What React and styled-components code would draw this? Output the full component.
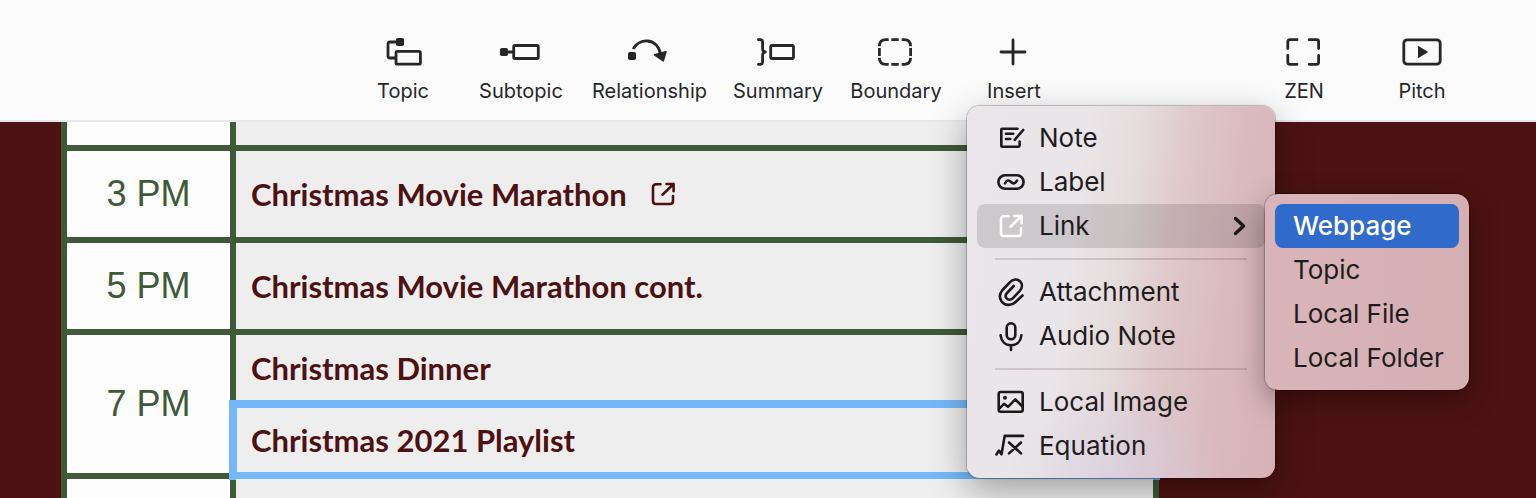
import React from "react";
import styled, { createGlobalStyle } from "styled-components";

const GlobalStyle = createGlobalStyle`
  * { box-sizing: border-box; }
  body { margin: 0; background: #4d1213; }
  button { font: inherit; color: inherit; background: none; border: 0; margin: 0; padding: 0; cursor: default; }
`;

const Page = styled.div`
  display: flex;
  flex-direction: column;
  height: 100vh;
  overflow: hidden;
  font-family: Inter, "Liberation Sans", sans-serif;
`;

const Toolbar = styled.header`
  position: relative;
  z-index: 2;
  flex: none;
  display: flex;
  justify-content: space-between;
  padding: 36px 67px 14px 356px;
  background: #fbfbfb;
  border-bottom: 2px solid #e7e7e7;
`;

const ToolGroup = styled.div`
  display: flex;
  gap: 24px;
`;

const ToolSlot = styled.div`
  position: relative;
`;

const ToolButton = styled.button`
  display: flex;
  flex-direction: column;
  align-items: center;
  gap: 8px;
  min-width: 94px;
  color: #262728;
  font-size: 20px;
  line-height: 30px;
  white-space: nowrap;
`;

const ToolIcon = styled.svg`
  display: block;
  width: 48px;
  height: 32px;
  fill: none;
  stroke: currentColor;
  stroke-width: 2.8;
  stroke-linecap: round;
  stroke-linejoin: round;
  .solid { fill: currentColor; stroke: none; }
`;

const MenuPanel = styled.ul`
  position: absolute;
  margin: 0;
  padding: 10px;
  list-style: none;
  border-radius: 13px;
  color: #1f1c1d;
  font-size: 26px;
  line-height: 44px;
`;

const InsertMenu = styled(MenuPanel)`
  left: 0;
  top: 70px;
  width: 308px;
  background:
    radial-gradient(ellipse 110px 100px at 48% 100%, rgba(214, 206, 228, 0.6), transparent),
    linear-gradient(98deg, #ebe6ea 0%, #eae5e8 34%, #e5dbdc 50%, #dfc9cb 62%, #dabbc0 78%, #d7b1b5 100%);
  box-shadow: 0 0 1px 1px rgba(0, 0, 0, 0.22), 0 12px 36px rgba(0, 0, 0, 0.34);
`;

const SubMenu = styled(MenuPanel)`
  left: 100%;
  top: -10px;
  width: 204px;
  background: linear-gradient(90deg, #d9b4b9, #d5afb2);
  box-shadow: 0 0 1px 1px rgba(0, 0, 0, 0.22), 0 10px 30px rgba(0, 0, 0, 0.34);
`;

const MenuRow = styled.li`
  position: relative;
`;

const MenuButton = styled.button`
  display: flex;
  align-items: center;
  gap: 12px;
  width: 100%;
  height: 44px;
  padding: 0 18px;
  border-radius: 8px;
  text-align: left;
  white-space: nowrap;
  background: ${(p) => (p.$state === "open" ? "rgba(0, 0, 0, 0.125)" : p.$state === "selected" ? "#306bcb" : "none")};
  color: ${(p) => (p.$state === "selected" ? "#fff" : "inherit")};
  font-weight: ${(p) => (p.$state === "selected" ? 500 : 400)};
`;

const MenuIcon = styled.svg`
  flex: none;
  display: block;
  width: 32px;
  height: 32px;
  fill: none;
  stroke: ${(p) => p.$color || "#1c191a"};
  stroke-width: 2.6;
  stroke-linecap: round;
  stroke-linejoin: round;
`;

const Chevron = styled.svg`
  width: 14px;
  height: 22px;
  margin-left: auto;
  fill: none;
  stroke: #1c191a;
  stroke-width: 3.4;
  stroke-linecap: round;
  stroke-linejoin: round;
`;

const Separator = styled.li`
  height: 2px;
  margin: 10px 18px;
  background: rgba(60, 20, 30, 0.15);
`;

const Canvas = styled.main`
  flex: 1;
  min-height: 0;
  overflow: hidden;
  padding: 0 377px 0 61px;
`;

const Schedule = styled.table`
  width: 100%;
  border-collapse: separate;
  border-spacing: 0;
  border: solid #3f5a38;
  border-width: 0 6px;
`;

const Row = styled.tr`
  height: ${(p) => p.$height}px;
`;

const TimeCell = styled.th`
  width: 169px;
  padding: 0;
  background: #fdfdfd;
  border: solid #3f5a38;
  border-width: 0 6px 6px 0;
  color: #3f5a38;
  font: 400 36px/40px "Liberation Sans", Arial, sans-serif;
  text-align: center;
`;

const EventCell = styled.td`
  position: relative;
  padding: 0 15px;
  background: #eee;
  border-bottom: 6px solid #3f5a38;
  color: #4e1113;
  font: 700 31px/36px Lato, sans-serif;

  &[aria-selected="true"]::after {
    content: "";
    position: absolute;
    inset: -7px;
    border: 8px solid #74b8f9;
  }
`;

const EventTitle = styled.div`
  display: flex;
  align-items: center;
  gap: 20px;
`;

const PlainLink = styled.a`
  display: block;
  color: inherit;
`;

function LinkGlyph({ color }) {
  return (
    <MenuIcon viewBox="0 0 32 32" $color={color} aria-hidden="true">
      <path d="M13.5 6.3H9Q6 6.3 6 9.3V23Q6 26 9 26H23Q26 26 26 23V18" />
      <path d="M15.5 16.7L26.6 6M19.5 6H26.6V13.3" />
    </MenuIcon>
  );
}

const toolIcons = {
  Topic: (
    <>
      <rect className="solid" x="17" y="2" width="8" height="8" rx="1.8" />
      <path d="M17 6H11Q9 6 9 8V20Q9 22 11 22H16" />
      <rect x="17" y="15.4" width="24.4" height="12.8" rx="1.5" />
    </>
  ),
  Subtopic: (
    <>
      <rect className="solid" x="3" y="12" width="8" height="8" rx="1.8" />
      <path d="M10 16H16" />
      <rect x="16.7" y="9.5" width="24.6" height="13" rx="1.5" />
    </>
  ),
  Relationship: (
    <>
      <rect className="solid" x="3" y="16" width="8" height="8" rx="1.8" />
      <path d="M8.2 13C13 2.5 32 .5 35.5 18" strokeLinecap="butt" />
      <path className="solid" d="M29.3 18.1Q28 18.9 29.4 19.8L37.5 25.3Q38.8 26.2 39.1 24.7L41.7 16Q42 14.5 40.5 15Z" />
    </>
  ),
  Summary: (
    <>
      <path d="M4.4 3.7H6.2Q8.6 3.7 8.6 6.2V12.5Q8.6 16 11.4 16Q8.6 16 8.6 19.5V25.8Q8.6 28.3 6.2 28.3H4.4" />
      <rect x="16.7" y="9.5" width="22.8" height="13" rx="1.5" />
    </>
  ),
  Boundary: (
    <path
      style={{ strokeLinecap: "butt" }}
      d="M16.7 3.7H14Q7.4 3.7 7.4 10.3M29.7 3.7H32Q38.6 3.7 38.6 10.3M38.6 21.7Q38.6 28.3 32 28.3H29.7M16.7 28.3H14Q7.4 28.3 7.4 21.7M19.3 3.7H26.7M19.3 28.3H26.7M7.4 12V20M38.6 12V20"
    />
  ),
  Insert: <path d="M23 4V28M11 16H35" />,
  ZEN: (
    <path d="M17 3.7H9.8Q7.8 3.7 7.8 5.7V12.5M29.2 3.7H36.6Q38.6 3.7 38.6 5.7V12.5M38.6 19.5V26.3Q38.6 28.3 36.6 28.3H29.2M17 28.3H9.8Q7.8 28.3 7.8 26.3V19.5" />
  ),
  Pitch: (
    <>
      <rect x="5.8" y="3.8" width="36.4" height="24.4" rx="3.5" />
      <path className="solid" d="M20 9.8V22.2L30.3 16Z" />
    </>
  ),
};

function Tool({ name, ...rest }) {
  return (
    <ToolButton type="button" {...rest}>
      <ToolIcon viewBox="0 0 48 32" aria-hidden="true">{toolIcons[name]}</ToolIcon>
      {name}
    </ToolButton>
  );
}

const menuIcons = {
  Note: (
    <path d="M22.5 6.8H7.3Q6.3 6.8 6.3 7.8V23.8Q6.3 24.8 7.3 24.8H22.7Q24.6 24.8 24.6 23V19.5M11 11.8H18.2M11 17H15.3M28.2 8L19.7 17.8" />
  ),
  Label: (
    <>
      <rect x="3.4" y="9.3" width="25.2" height="13.4" rx="6.7" />
      <path d="M10 17.3C12 13.8 13.8 13.8 16 16C18 18 20 18 22 14.7" />
    </>
  ),
  Attachment: (
    <path d="M27.5 19.5L20.3 26.3C16 30.3 9.5 29.5 6.6 25.4C4 21.6 4.5 17.5 7.5 14L14.8 6.3C18 2.8 22.4 2.7 25 5.2C27.7 8 27.4 12 24.8 14.9L17.7 22.3C15.8 24.2 13.2 24.2 11.7 22.5C10.2 20.8 10.4 18.7 12 17L18.7 10" />
  ),
  "Audio Note": (
    <>
      <rect x="11.7" y="3.3" width="8.6" height="16" rx="4.3" />
      <path d="M5.6 15.3C6.3 21.5 10.4 25.3 16 25.3S25.7 21.5 26.4 15.3M16 25.5V30" />
    </>
  ),
  "Local Image": (
    <>
      <rect x="3.7" y="6" width="24" height="19.8" rx="2" />
      <circle cx="10" cy="11.7" r="2" fill="#1c191a" stroke="none" />
      <path d="M4.5 22.3L9 17.8L13 20.8L20.3 13.4L27.5 20.5" />
    </>
  ),
  Equation: <path d="M1.4 24.5L3.9 20.6L6.5 24.3L9.7 5.9H28M14 12.5L26 23.4M26 12.5L14 23.4" />,
};

function MenuItem({ name }) {
  return (
    <MenuRow role="none">
      <MenuButton type="button" role="menuitem">
        <MenuIcon viewBox="0 0 32 32" aria-hidden="true">{menuIcons[name]}</MenuIcon>
        {name}
      </MenuButton>
    </MenuRow>
  );
}

function LinkMenuItem() {
  return (
    <MenuRow role="none">
      <MenuButton type="button" role="menuitem" aria-haspopup="menu" aria-expanded="true" $state="open">
        <LinkGlyph color="#fff" />
        Link
        <Chevron viewBox="0 0 14 22" aria-hidden="true">
          <path d="M2.5 3.5L10.5 11L2.5 18.5" />
        </Chevron>
      </MenuButton>
      <SubMenu role="menu" aria-label="Link">
        {["Webpage", "Topic", "Local File", "Local Folder"].map((name, i) => (
          <MenuRow role="none" key={name}>
            <MenuButton type="button" role="menuitem" $state={i === 0 ? "selected" : undefined}>
              {name}
            </MenuButton>
          </MenuRow>
        ))}
      </SubMenu>
    </MenuRow>
  );
}

export default function App() {
  return (
    <Page>
      <GlobalStyle />
      <Toolbar>
        <ToolGroup>
          {["Topic", "Subtopic", "Relationship", "Summary", "Boundary"].map((name) => (
            <Tool key={name} name={name} />
          ))}
          <ToolSlot>
            <Tool name="Insert" aria-haspopup="menu" aria-expanded="true" />
            <InsertMenu role="menu" aria-label="Insert">
              <MenuItem name="Note" />
              <MenuItem name="Label" />
              <LinkMenuItem />
              <Separator role="separator" />
              <MenuItem name="Attachment" />
              <MenuItem name="Audio Note" />
              <Separator role="separator" />
              <MenuItem name="Local Image" />
              <MenuItem name="Equation" />
            </InsertMenu>
          </ToolSlot>
        </ToolGroup>
        <ToolGroup>
          <Tool name="ZEN" />
          <Tool name="Pitch" />
        </ToolGroup>
      </Toolbar>
      <Canvas>
        <Schedule>
          <tbody>
            <Row $height={29}>
              <TimeCell />
              <EventCell />
            </Row>
            <Row $height={92}>
              <TimeCell scope="row">3 PM</TimeCell>
              <EventCell>
                <EventTitle>
                  Christmas Movie Marathon
                  <PlainLink href="#marathon" aria-label="Open link">
                    <LinkGlyph color="#4e1113" />
                  </PlainLink>
                </EventTitle>
              </EventCell>
            </Row>
            <Row $height={92}>
              <TimeCell scope="row">5 PM</TimeCell>
              <EventCell>Christmas Movie Marathon cont.</EventCell>
            </Row>
            <Row $height={72}>
              <TimeCell scope="row" rowSpan={2}>7 PM</TimeCell>
              <EventCell>Christmas Dinner</EventCell>
            </Row>
            <Row $height={72}>
              <EventCell aria-selected="true">Christmas 2021 Playlist</EventCell>
            </Row>
            <Row $height={92}>
              <TimeCell />
              <EventCell />
            </Row>
          </tbody>
        </Schedule>
      </Canvas>
    </Page>
  );
}
